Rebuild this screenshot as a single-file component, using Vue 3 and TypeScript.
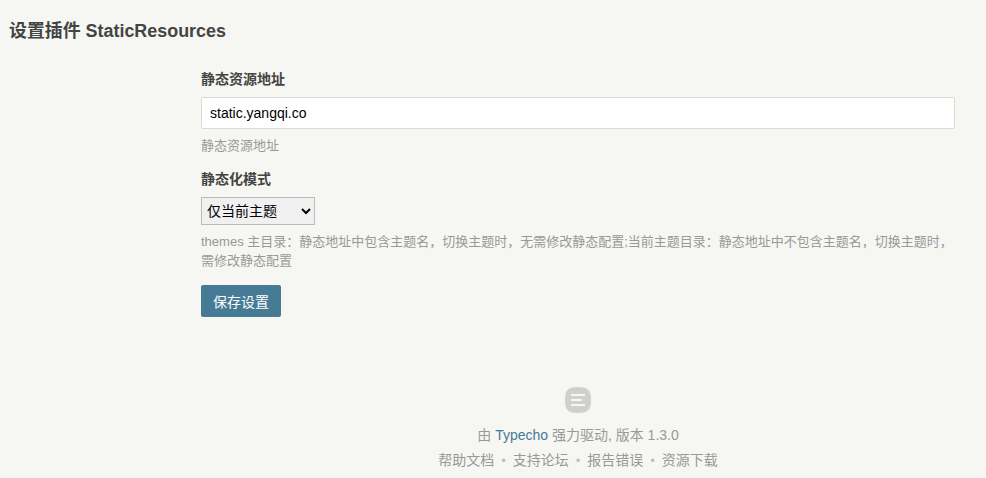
<script setup lang="ts">
const links: string[] = ['帮助文档', '支持论坛', '报告错误', '资源下载']
</script>

<template>
  <div class="page">
    <h2 class="title">设置插件 StaticResources</h2>
    <form class="form" @submit.prevent>
      <div class="field">
        <label class="label">静态资源地址</label>
        <input class="text" type="text" value="static.yangqi.co" />
        <p class="desc">静态资源地址</p>
      </div>
      <div class="field">
        <label class="label">静态化模式</label>
        <select class="select">
          <option>仅当前主题</option>
          <option>themes 主目录</option>
        </select>
        <p class="desc">themes 主目录：静态地址中包含主题名，切换主题时，无需修改静态配置;当前主题目录：静态地址中不包含主题名，切换主题时，需修改静态配置</p>
      </div>
      <button class="save" type="submit">保存设置</button>
    </form>
    <footer class="footer">
      <svg class="logo" width="26" height="26" viewBox="0 0 26 26" aria-hidden="true">
        <path d="M13 0C23 0 26 3 26 13C26 23 23 26 13 26C3 26 0 23 0 13C0 3 3 0 13 0Z" fill="#cfcfcd" />
        <rect x="6" y="7" width="14" height="2" fill="#f6f6f3" />
        <rect x="6" y="12" width="11" height="2" fill="#f6f6f3" />
        <rect x="6" y="17" width="14" height="2" fill="#f6f6f3" />
      </svg>
      <p class="power">由 <a class="brand" href="#">Typecho</a> 强力驱动, 版本 1.3.0</p>
      <nav class="links">
        <template v-for="(l, i) in links" :key="l">
          <span v-if="i > 0" class="dot">•</span>
          <a class="link" href="#">{{ l }}</a>
        </template>
      </nav>
    </footer>
  </div>
</template>

<style>
html, body { margin: 0; background: #f6f6f3; }
</style>

<style scoped>
.page {
  box-sizing: border-box;
  height: 478px;
  overflow: hidden;
  font-family: "Liberation Sans", "Noto Sans CJK SC", sans-serif;
  font-size: 14px;
  line-height: 20px;
  color: #444;
}
.title {
  margin: 0 0 0 9px;
  padding-top: 21px;
  font-size: 17.92px;
  line-height: 21px;
  font-weight: bold;
}
.form {
  margin: 27px 31px 0 201px;
}
.field + .field { margin-top: 14px; }
.label {
  display: block;
  font-weight: bold;
  line-height: 20px;
  margin-bottom: 8px;
}
.text {
  display: block;
  box-sizing: border-box;
  width: 100%;
  height: 32px;
  padding: 0 8px;
  border: 1px solid #d9d9d6;
  border-radius: 2px;
  background: #fff;
  font: 14px "Liberation Sans", sans-serif;
  color: #000;
  outline: none;
}
.select {
  display: block;
  box-sizing: border-box;
  width: 114px;
  height: 28px;
  padding: 0 0 0 1px;
  border: 1px solid #bbb;
  border-radius: 0;
  background: #f0f0f0;
  font: 14px "Liberation Sans", "Noto Sans CJK SC", sans-serif;
  color: #000;
}
.desc {
  margin: 7px 0 0;
  font-size: 13px;
  line-height: 19px;
  color: #999;
}
.save {
  display: block;
  box-sizing: border-box;
  width: 80px;
  height: 32px;
  margin-top: 15px;
  border: 0;
  border-radius: 2px;
  background: #467b96;
  color: #fff;
  font: 14px "Liberation Sans", "Noto Sans CJK SC", sans-serif;
  padding: 0;
}
.footer {
  margin: 70px 21px 0 191px;
  text-align: center;
  color: #999;
  font-size: 14px;
}
.logo { display: block; margin: 0 auto; }
.power { margin: 12px 0 0; line-height: 20px; }
.brand { color: #467b96; text-decoration: none; }
.links { margin-top: 5px; line-height: 20px; }
.link { color: #999; text-decoration: none; }
.dot { margin: 0 7.15px; color: #bbb; font-size: 12px; }
</style>
